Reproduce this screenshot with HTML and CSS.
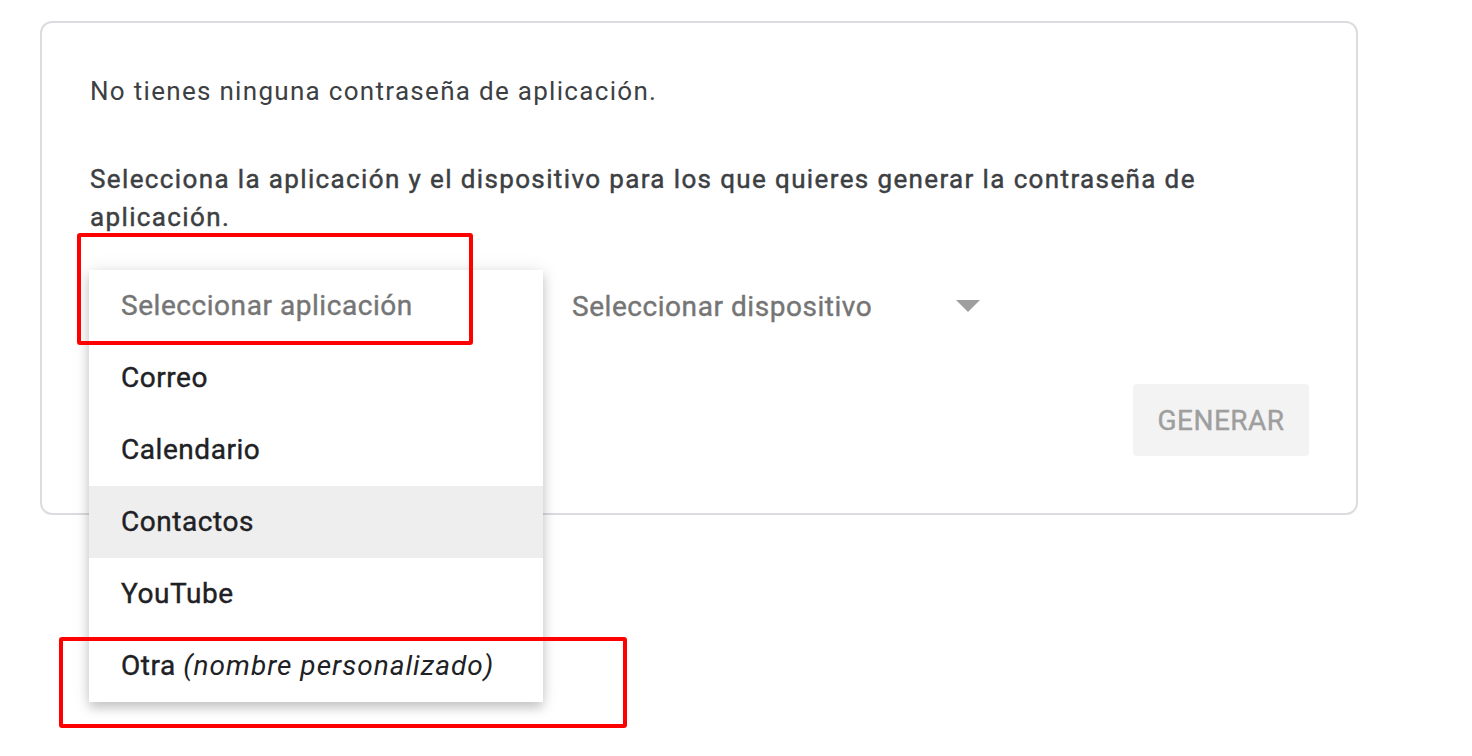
FILE: index.html
```html
<!DOCTYPE html>
<html lang="es">
  <head>
    <meta charset="UTF-8" />
    <meta name="viewport" content="width=device-width, initial-scale=1.0" />
    <title>Contraseñas de aplicación</title>
    <link rel="stylesheet" href="styles.css">
  </head>
  <body>
    <div class="page">
      <div class="card">
        <p class="empty">No tienes ninguna contraseña de aplicación.</p>
        <p class="intro">Selecciona la aplicación y el dispositivo para los que quieres generar la contraseña de aplicación.</p>

        <div class="selects">
          <div class="app-select">
            <ul class="menu">
              <li class="placeholder">Seleccionar aplicación</li>
              <li>Correo</li>
              <li>Calendario</li>
              <li class="hover">Contactos</li>
              <li>YouTube</li>
              <li>Otra <em>(nombre personalizado)</em></li>
            </ul>
          </div>
          <div class="device-select">
            <span>Seleccionar dispositivo</span>
            <span class="arrow"></span>
          </div>
        </div>

        <div class="actions">
          <button type="button" disabled>GENERAR</button>
        </div>
      </div>

      <!-- marcas de anotación -->
      <div class="mark mark-top"></div>
      <div class="mark mark-bottom"></div>
    </div>
  </body>
</html>
```

FILE: styles.css
```css
body {
  margin: 0;
  background: #fff;
  font-family: Roboto, "Noto Sans", Arial, sans-serif;
  color: #3c4043;
}
.page {
  position: relative;
  padding: 21px 0 0 40px;
  height: 735px;
}
.card {
  position: relative;
  width: 1318px;
  box-sizing: border-box;
  border: 2px solid #dadce0;
  border-radius: 12px;
  padding: 50px 47px 57px 48px;
}
.card p {
  margin: 0;
  font-size: 26px;
  line-height: 36px;
  letter-spacing: 1.3px;
}
.empty {
  margin-bottom: 51px !important;
}
/* Roboto Medium n'est pas installée : regular + léger contour */
.intro {
  font-weight: 400;
  -webkit-text-stroke: 0.45px currentColor;
  line-height: 38px !important;
  letter-spacing: 1.37px !important;
  padding-right: 60px;
}
.selects {
  display: flex;
  height: 72px;
  margin-top: 34px;
  align-items: center;
}
.app-select {
  position: relative;
  width: 482px;
  height: 72px;
}
.menu {
  position: absolute;
  left: -1px;
  top: 0;
  width: 454px;
  margin: 0;
  padding: 0;
  list-style: none;
  background: #fff;
  box-shadow: 0 6px 10px rgba(0, 0, 0, 0.18), 0 1px 18px rgba(0, 0, 0, 0.1);
  z-index: 2;
}
.menu li {
  height: 72px;
  line-height: 72px;
  padding-left: 32px;
  font-size: 28px;
  font-weight: 400;
  -webkit-text-stroke: 0.4px currentColor;
  letter-spacing: 0.55px;
  color: #202124;
}
.menu li em {
  -webkit-text-stroke: 0;
  letter-spacing: 1px;
}
.menu .placeholder {
  color: #757575;
}
.menu .hover {
  background: #eee;
}
.device-select {
  display: flex;
  align-items: center;
  justify-content: space-between;
  width: 410px;
  font-size: 28px;
  font-weight: 400;
  -webkit-text-stroke: 0.4px currentColor;
  letter-spacing: 0.55px;
  color: #757575;
}
.arrow {
  width: 0;
  height: 0;
  border-left: 12px solid transparent;
  border-right: 12px solid transparent;
  border-top: 12px solid #9e9e9e;
  margin-right: 2px;
}
.actions {
  display: flex;
  justify-content: flex-end;
  margin-top: 42px;
}
button {
  width: 176px;
  height: 72px;
  border: none;
  border-radius: 4px;
  background: #f3f3f3;
  color: #9e9e9e;
  font-family: inherit;
  font-size: 28px;
  font-weight: 400;
  -webkit-text-stroke: 0.4px currentColor;
  letter-spacing: 0.45px;
}
.mark {
  position: absolute;
  box-sizing: border-box;
  border: 4px solid #ff0000;
  border-radius: 3px;
  z-index: 3;
}
.mark-top {
  left: 77px;
  top: 233px;
  width: 396px;
  height: 112px;
}
.mark-bottom {
  left: 59px;
  top: 637px;
  width: 568px;
  height: 91px;
}
```
